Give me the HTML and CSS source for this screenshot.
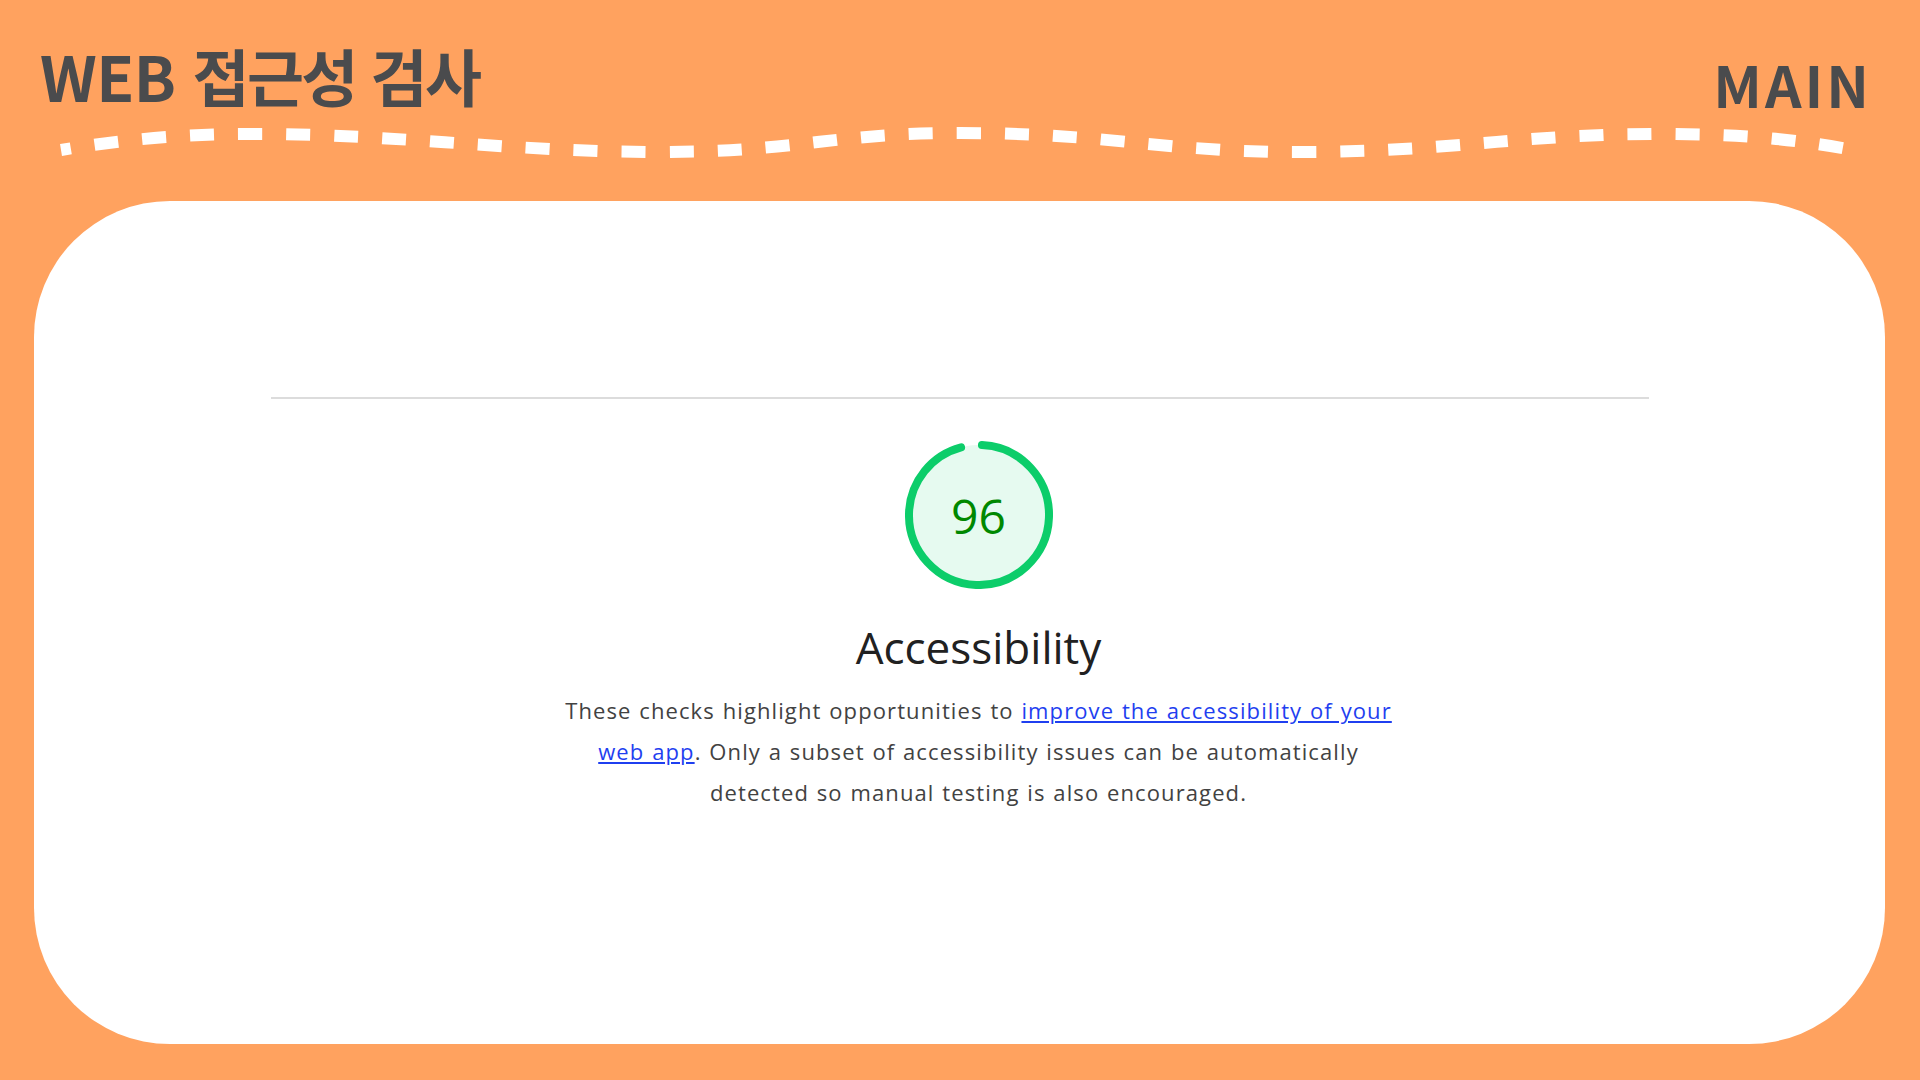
FILE: index.html
```html
<!DOCTYPE html>
<html lang="ko">
<head>
<meta charset="utf-8">
<title>WEB 접근성 검사 - MAIN</title>
<link rel="stylesheet" href="styles.css">
</head>
<body>
  <header class="top">
    <div class="title-row">
      <h1 class="title"><span class="title-latin">WEB</span> <span class="title-ko">접근성 검사</span></h1>
      <div class="tag">MAIN</div>
    </div>
    <svg class="wave" width="1920" height="50" viewBox="0 120 1920 50" aria-hidden="true">
      <path d="M61,150 C120,140 180,134 254,134 C400,134 510,152 660,152 C800,152 830,133 960,133 C1110,133 1160,152 1300,152 C1450,152 1520,134 1658,134 C1760,134 1810,142 1858,151" fill="none" stroke="#ffffff" stroke-width="12" stroke-dasharray="24 24" stroke-dashoffset="14"/>
    </svg>
  </header>

  <main class="card">
    <div class="report">
      <hr class="divider">
      <section class="category">
        <div class="gauge">
          <svg class="gauge-svg" width="148" height="148" viewBox="0 0 148 148" aria-hidden="true">
            <circle class="gauge-base" cx="74" cy="74" r="70"/>
            <circle class="gauge-arc" cx="74" cy="74" r="70" stroke-dasharray="418 22" transform="rotate(-87.6 74 74)"/>
          </svg>
          <span class="gauge-value">96</span>
        </div>
        <h2 class="category-title">Accessibility</h2>
        <p class="category-desc">These checks highlight opportunities to <a href="#">improve the accessibility of your<br>web app</a>. Only a subset of accessibility issues can be automatically<br>detected so manual testing is also encouraged.</p>
      </section>
    </div>
  </main>
</body>
</html>
```

FILE: styles.css
```css
* {
  box-sizing: border-box;
}

html, body {
  margin: 0;
  padding: 0;
}

body {
  width: 1920px;
  height: 1080px;
  background: #ffa25f;
  font-family: "Open Sans", "Noto Sans", "Noto Sans CJK KR", sans-serif;
  overflow: hidden;
}

.top {
  height: 201px;
  display: flex;
  flex-direction: column;
}

.title-row {
  height: 120px;
  display: flex;
  justify-content: space-between;
  align-items: flex-start;
  padding: 0 48px 0 40px;
}

.title {
  margin: 0;
  padding-top: 44px;
  font-family: "Noto Sans CJK KR", "Noto Sans", sans-serif;
  font-weight: 700;
  font-size: 62px;
  line-height: 1;
  color: #4a4b4d;
  letter-spacing: -0.5px;
  white-space: nowrap;
}

.title-ko {
  letter-spacing: -2.6px;
}

.tag {
  padding-top: 55px;
  font-family: "Noto Sans CJK KR", "Noto Sans", sans-serif;
  font-weight: 700;
  font-size: 57px;
  line-height: 1;
  color: #4a4b4d;
  letter-spacing: 3px;
}

.wave {
  display: block;
  flex: none;
}

.card {
  margin: 0 35px 0 34px;
  height: 843px;
  background: #ffffff;
  border-radius: 136px;
  display: flex;
  justify-content: center;
}

.report {
  width: 1378px;
  padding-top: 196px;
  display: flex;
  flex-direction: column;
  align-items: center;
}

.divider {
  width: 100%;
  margin: 0;
  border: 0;
  height: 2px;
  background: #dcdcdc;
}

.category {
  display: flex;
  flex-direction: column;
  align-items: center;
  padding-left: 38px;
  padding-top: 42px;
}

.gauge {
  position: relative;
  width: 148px;
  height: 148px;
}

.gauge-svg {
  display: block;
}

.gauge-base {
  fill: #e6faf0;
  stroke: none;
}

.gauge-arc {
  fill: none;
  stroke: #0ccd6a;
  stroke-width: 8;
  stroke-linecap: round;
}

.gauge-value {
  position: absolute;
  inset: 0;
  display: flex;
  align-items: center;
  justify-content: center;
  font-family: "Open Sans", sans-serif;
  font-size: 48px;
  color: #008800;
  line-height: 1;
  padding-top: 2px;
}

.category-title {
  margin: 36px 0 0;
  font-family: "Open Sans", sans-serif;
  font-weight: 400;
  font-size: 44px;
  line-height: 44px;
  color: #212121;
}

.category-desc {
  margin: 21px 0 0;
  font-family: "Open Sans", sans-serif;
  font-size: 22px;
  line-height: 41px;
  letter-spacing: 1.1px;
  word-spacing: 1px;
  color: #424242;
  text-align: center;
  white-space: nowrap;
}

.category-desc a {
  color: #1f3ff0;
  text-decoration: underline;
}
```
